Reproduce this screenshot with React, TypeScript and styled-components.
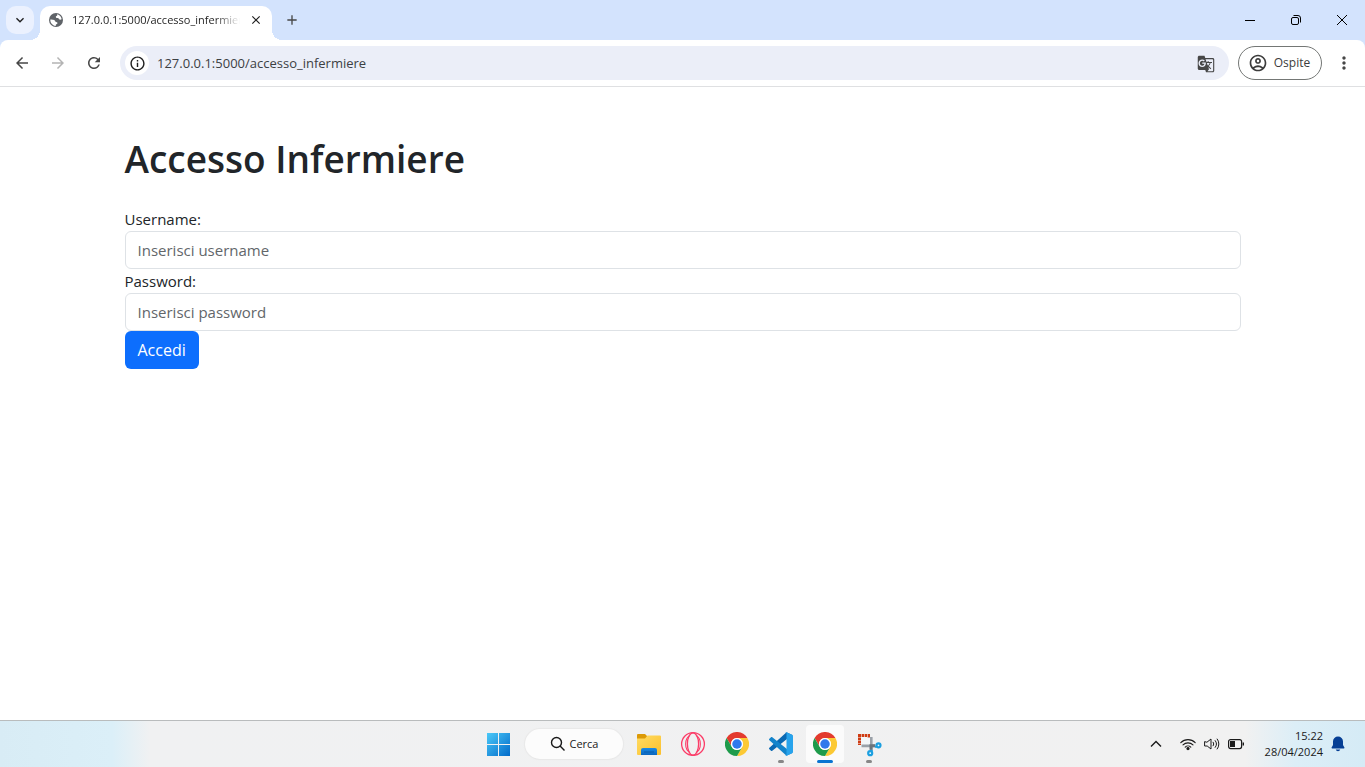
import React from "react";
import styled, { createGlobalStyle } from "styled-components";
import {
  MdAdd,
  MdArrowBack,
  MdArrowForward,
  MdClose,
  MdGTranslate,
  MdInfoOutline,
  MdKeyboardArrowDown,
  MdMoreVert,
  MdOutlineAccountCircle,
  MdRefresh,
} from "react-icons/md";

const GlobalStyle = createGlobalStyle`
  *, *::before, *::after { box-sizing: border-box; }
  body {
    margin: 0;
    background: #fff;
    color: #212529;
    font-family: "Open Sans", "Noto Sans", sans-serif;
    font-size: 15px;
    line-height: 24px;
  }
  button, input { font: inherit; color: inherit; margin: 0; }
  button { border: 0; padding: 0; background: none; cursor: pointer; }
  svg { display: block; flex: none; }
`;

const Screen = styled.div`
  display: flex;
  flex-direction: column;
  min-height: 100vh;
`;

/* Browser window */

const TabStrip = styled.header`
  display: flex;
  align-items: flex-start;
  height: 40px;
  padding-left: 6px;
  background: #d3e3fd;
`;

const TabSearch = styled.button`
  display: grid;
  place-items: center;
  width: 28px;
  height: 28px;
  margin: 6px 6px 0 0;
  border-radius: 10px;
  background: #ebf1fe;
  color: #1f1f1f;
`;

const Tab = styled.div`
  position: relative;
  display: flex;
  align-items: center;
  width: 232px;
  height: 34px;
  margin-top: 6px;
  padding: 0 8px 6px;
  border-radius: 10px 10px 0 0;
  background: #fff;
  color: #5f6368;

  &::before,
  &::after {
    content: "";
    position: absolute;
    bottom: 0;
    width: 10px;
    height: 10px;
  }
  &::before {
    left: -10px;
    background: radial-gradient(circle at 0 0, transparent 10px, #fff 10px);
  }
  &::after {
    right: -10px;
    background: radial-gradient(circle at 100% 0, transparent 10px, #fff 10px);
  }
`;

const TabTitle = styled.span`
  flex: 1;
  min-width: 0;
  margin: 0 8px;
  overflow: hidden;
  white-space: nowrap;
  color: #1f1f1f;
  font-size: 11px;
  line-height: 16px;
  mask-image: linear-gradient(to right, #000 85%, transparent);
`;

const SmallButton = styled.button`
  display: grid;
  place-items: center;
  width: 16px;
  height: 16px;
  color: #1f1f1f;
`;

const NewTab = styled.button`
  display: grid;
  place-items: center;
  width: 28px;
  height: 28px;
  margin: 6px 0 0 6px;
  color: #474747;
`;

const WindowControls = styled.div`
  display: flex;
  margin-left: auto;
`;

const WindowButton = styled.button`
  display: grid;
  place-items: center;
  width: 46px;
  height: 40px;
  color: #000;
`;

const ToolbarBack = styled.div`
  background: #d3e3fd;
`;

const Toolbar = styled.nav`
  display: flex;
  align-items: center;
  height: 47px;
  padding: 0 3px 0 4px;
  border-bottom: 1px solid #dfe0e2;
  border-radius: 8px 8px 0 0;
  background: #fff;
`;

const NavButton = styled.button<{ $muted?: boolean }>`
  display: grid;
  place-items: center;
  width: 36px;
  height: 36px;
  color: ${(p) => (p.$muted ? "#b4b4b4" : "#474747")};
`;

const AddressBar = styled.div`
  display: flex;
  flex: 1;
  align-items: center;
  height: 34px;
  margin: 0 9px 0 8px;
  padding: 0 16px 0 5px;
  border-radius: 17px;
  background: #ebeef8;
  color: #474747;
`;

const SiteInfo = styled.button`
  display: grid;
  place-items: center;
  width: 24px;
  height: 24px;
  border-radius: 50%;
  background: #fff;
  color: #1f1f1f;
`;

const AddressInput = styled.input`
  flex: 1;
  min-width: 0;
  height: 24px;
  padding: 0 8px;
  border: 0;
  outline: 0;
  background: none;
  color: #3c4043;
  font-size: 13px;
`;

const Profile = styled.button`
  display: flex;
  align-items: center;
  justify-content: center;
  gap: 6px;
  width: 84px;
  height: 34px;
  margin-right: 4px;
  padding-right: 2px;
  border: 1px solid #747775;
  border-radius: 17px;
  color: #3c3c3c;
  font-size: 12px;
`;

/* Login page */

const Container = styled.main`
  flex: 1;
  width: 100%;
  max-width: 1140px;
  margin: 0 auto;
  padding: 48px 12px;
`;

const Title = styled.h1`
  margin: 0 0 24px;
  font-size: 37px;
  font-weight: 600;
  line-height: 48px;
`;

const Form = styled.form`
  display: flex;
  flex-direction: column;
  align-items: flex-start;
`;

const Label = styled.label`
  color: #212529;
`;

const TextField = styled.input`
  width: 100%;
  height: 38px;
  padding: 6px 12px;
  border: 1px solid #dee2e6;
  border-radius: 6px;
  background: #fff;

  &::placeholder {
    color: #62666a;
    opacity: 1;
  }
`;

const Submit = styled.button`
  height: 38px;
  padding: 0 13px;
  border-radius: 6px;
  background: #0d6efd;
  color: #fff;
  font-size: 16px;
`;

/* Taskbar */

const Taskbar = styled.footer`
  display: grid;
  grid-template-columns: 1fr auto 1fr;
  align-items: center;
  height: 47px;
  border-top: 1px solid #b9bcbd;
  background: linear-gradient(
    to right,
    #d8ecf5 0,
    #dbeff8 112px,
    #f0f1f2 150px,
    #f1f1f1 calc(100% - 120px),
    #dceef7 calc(100% - 70px),
    #d5ebf6 100%
  );
`;

const Apps = styled.div`
  grid-column: 2;
  display: flex;
  align-items: center;
  gap: 4px;
  padding-left: 3px;
`;

const AppButton = styled.button<{ $state?: "open" | "active" }>`
  position: relative;
  display: grid;
  place-items: center;
  width: 40px;
  height: 40px;
  border: 1px solid transparent;
  background: ${(p) => (p.$state === "active" ? "#fbfbfb" : "none")};
  background-clip: padding-box;
  border-radius: 5px;

  &::after {
    content: "";
    display: ${(p) => (p.$state ? "block" : "none")};
    position: absolute;
    bottom: 0;
    left: 50%;
    width: ${(p) => (p.$state === "active" ? 16 : 6)}px;
    height: 3px;
    border-radius: 2px;
    background: ${(p) => (p.$state === "active" ? "#0a74d1" : "#878787")};
    transform: translateX(-50%);
  }
`;

const SearchButton = styled.button`
  display: flex;
  align-items: center;
  justify-content: center;
  gap: 4px;
  width: 98px;
  height: 30px;
  margin: 0 2px;
  border-radius: 15px;
  background: #fcfcfc;
  box-shadow: 0 0 1px 1px #e8e8e8;
  color: #1a1a1a;
  font-size: 11px;
`;

const Tray = styled.div`
  display: flex;
  align-items: center;
  justify-content: flex-end;
  padding-right: 19px;
  color: #1a1a1a;
`;

const TrayButton = styled.button<{ $gap?: number }>`
  display: grid;
  place-items: center;
  width: 16px;
  height: 24px;
  margin-right: ${(p) => p.$gap ?? 8}px;
`;

const Clock = styled.div`
  display: flex;
  flex-direction: column;
  margin: 0 7px 0 13px;
  text-align: right;
  font-size: 11px;
  line-height: 16px;
`;

const GlobeIcon = () => (
  <svg width="16" height="16" viewBox="0 0 16 16">
    <circle cx="8" cy="8" r="7" fill="#5f6368" />
    <path
      fill="#fff"
      d="M9.200 2.200c1 .2 2.600 1 3.400 2.200.7 1 1 2 1 2.800-.9.700-2.200.6-2.600-.2-.3-.7-1-.9-1.800-.9-1 0-1.600-.7-1.300-1.500.2-.6 1-.6 1.300-1.100.2-.5-.2-.9 0-1.300zM2.300 7.500c1.300-.2 3 0 4 .5.800.500.5 1.300 1.300 1.700.8.400 1.800.3 1.900 1.200.1 1-1.100 1-1.500 1.600-.3.500 0 1-.4 1.400C4.500 13.500 2.200 11 2.300 7.500z"
    />
  </svg>
);

const WindowsLogo = () => (
  <svg width="24" height="24" viewBox="0 0 24 24">
    <defs>
      <linearGradient id="win" gradientUnits="userSpaceOnUse" x1="0" y1="0" x2="24" y2="24">
        <stop offset="0" stopColor="#4ccbf9" />
        <stop offset="1" stopColor="#0068c8" />
      </linearGradient>
    </defs>
    <path fill="url(#win)" d="M0 1h11v11H0zM12 1h11v11H12zM0 13h11v11H0zM12 13h11v11H12z" />
  </svg>
);

const FolderLogo = () => (
  <svg width="26" height="24" viewBox="0 0 26 24">
    <defs>
      <linearGradient id="folder" x1="0" y1="0" x2="1" y2="1">
        <stop offset="0" stopColor="#ffdc63" />
        <stop offset="1" stopColor="#fbc02d" />
      </linearGradient>
      <linearGradient id="pocket" x1="0" y1="0" x2="0" y2="1">
        <stop offset="0" stopColor="#1a8be6" />
        <stop offset="1" stopColor="#0c66bd" />
      </linearGradient>
    </defs>
    <path fill="#dc9a07" d="M1 3a1 1 0 0 1 1-1h7l2 2h2v5H1z" />
    <path fill="url(#folder)" d="M1 6.500h8l2.500-3H24a1 1 0 0 1 1 1V22a1 1 0 0 1-1 1H2a1 1 0 0 1-1-1z" />
    <path fill="url(#pocket)" d="M5 23v-5a2 2 0 0 1 2-2h12a2 2 0 0 1 2 2v5z" />
    <path fill="#0a5dab" d="M8 19.500h10v1H8z" />
  </svg>
);

const OperaLogo = () => (
  <svg width="26" height="26" viewBox="0 0 26 26" fill="none" stroke="#fb3d68">
    <circle cx="13" cy="13" r="11.400" strokeWidth="1.300" />
    <ellipse cx="13" cy="13" rx="5.600" ry="11.200" strokeWidth="1.300" />
    <path strokeWidth="1.100" d="M10 4.500C4.200 7.500 4.200 18.500 10 21.500M16 4.500c5.800 3 5.800 14 0 17" />
  </svg>
);

const ChromeLogo = () => (
  <svg width="24" height="24" viewBox="0 0 48 48">
    <path fill="#e33b2e" d="M3.200 12A24 24 0 0 1 44.800 12H24a12 12 0 0 0-10.400 18z" />
    <path fill="#fcc934" d="M44.800 12A24 24 0 0 1 24 48l10.400-18A12 12 0 0 0 24 12z" />
    <path fill="#1e9b4b" d="M24 48A24 24 0 0 1 3.200 12l10.400 18a12 12 0 0 0 20.800 0z" />
    <circle cx="24" cy="24" r="12" fill="#fff" />
    <circle cx="24" cy="24" r="9.500" fill="#2f79ec" />
  </svg>
);

const CodeLogo = () => (
  <svg width="24" height="24" viewBox="0 0 24 24">
    <path fill="#0a69b3" d="M17.500.3 24 3.200 17.600 7.200 3.300 18.700c-.4.3-.9.300-1.300 0L.400 17.200c-.5-.4-.5-1.100 0-1.500z" />
    <path fill="#1384cb" d="M17.500 23.700 24 20.800 17.600 16.800 3.300 5.300c-.4-.3-.9-.3-1.300 0L.400 6.800c-.5.400-.5 1.100 0 1.500z" />
    <path fill="#27a3ec" d="M17.500 23.700c-.6.200-1.200.1-1.700-.4.600.6 1.700.2 1.700-.7V1.400c0-.9-1.100-1.300-1.700-.7.500-.5 1.100-.6 1.700-.4l5.500 2.500c.6.300 1 .9 1 1.500v15.400c0 .6-.4 1.200-1 1.500z" />
  </svg>
);

const SnipLogo = () => (
  <svg width="26" height="26" viewBox="0 0 26 26" fill="none">
    <path fill="#f3f6f8" d="M3 5h11v10H3z" />
    <path
      fill="#cf3b12"
      d="M2 3h3v3H2zM5.600 3h2.400v3H5.600zM8.600 3H11v3H8.600zM11.600 3H14v3.500h-2.400zM2 6.600h3V9H2zM2 9.600h3V12H2zM2 12.600h3V14H2z"
    />
    <path fill="#9aa1a8" d="M14 6h2.600v14H14zM5.500 13.600h14v2.600h-14z" />
    <path fill="#6c747b" d="M13.500 13.200h5.500v3h-2.500v2.500h-3z" />
    <circle cx="22.500" cy="14.300" r="2" fill="#e8f6fd" stroke="#1b9fe0" strokeWidth="2.200" />
    <circle cx="14.200" cy="22.200" r="2" fill="#e8f6fd" stroke="#1b9fe0" strokeWidth="2.200" />
    <path stroke="#1b9fe0" strokeWidth="2" d="M20.800 15.300l-1.800.8M15.200 20.500l.7-1.600" />
  </svg>
);

const SearchIcon = () => (
  <svg width="16" height="16" viewBox="0 0 16 16" fill="none" stroke="#1a1a1a" strokeWidth="1.400">
    <circle cx="6.500" cy="6.500" r="5" />
    <path d="M10.100 10.100 14.500 14.500" />
  </svg>
);

const WifiIcon = () => (
  <svg width="16" height="16" viewBox="0 0 16 16" fill="none" stroke="currentColor" strokeWidth="1.100" strokeLinecap="round">
    <path d="M.8 6.600a10.200 10.200 0 0 1 14.400 0M3 8.900a7.100 7.100 0 0 1 10 0M5.200 11.100a4 4 0 0 1 5.600 0" />
    <circle cx="8" cy="12.600" r="1.100" fill="currentColor" />
  </svg>
);

const SpeakerIcon = () => (
  <svg width="16" height="16" viewBox="0 0 16 16" fill="none" stroke="currentColor" strokeLinejoin="round" strokeLinecap="round">
    <path d="M.6 6v4h2.600L7 13V3L3.200 6z" />
    <path d="M9.200 6.200a3 3 0 0 1 0 3.600M11.200 4.600a5.400 5.400 0 0 1 0 6.800M13.200 3a8 8 0 0 1 0 10" />
  </svg>
);

const BatteryIcon = () => (
  <svg width="16" height="16" viewBox="0 0 16 16" fill="none" stroke="currentColor">
    <rect x=".6" y="3.600" width="13" height="9" rx="2" strokeWidth="1.200" />
    <rect x="2.500" y="5.500" width="4" height="5" fill="currentColor" />
    <path d="M15.300 6.500v3" strokeWidth="1.400" />
  </svg>
);

const BellIcon = () => (
  <svg width="16" height="16" viewBox="0 0 16 16" fill="#063f95">
    <path d="M8 .5a5 5 0 0 1 5 5V9l1.400 2.600c.2.500 0 .9-.6.900H2.200c-.6 0-.8-.4-.6-.9L3 9V5.500a5 5 0 0 1 5-5zM5.700 13.500h4.600a2.400 2.400 0 0 1-4.600 0z" />
  </svg>
);

export default function App() {
  return (
    <Screen>
      <GlobalStyle />
      <TabStrip>
        <TabSearch aria-label="Cerca schede">
          <MdKeyboardArrowDown size={16} />
        </TabSearch>
        <Tab>
          <GlobeIcon />
          <TabTitle>127.0.0.1:5000/accesso_infermiere</TabTitle>
          <SmallButton aria-label="Chiudi scheda">
            <MdClose size={14} />
          </SmallButton>
        </Tab>
        <NewTab aria-label="Nuova scheda">
          <MdAdd size={16} />
        </NewTab>
        <WindowControls>
          <WindowButton aria-label="Riduci a icona">
            <svg width="10" height="10" viewBox="0 0 10 10" stroke="currentColor">
              <path d="M0 5.500h10" />
            </svg>
          </WindowButton>
          <WindowButton aria-label="Ripristina">
            <svg width="10" height="10" viewBox="0 0 10 10" fill="none" stroke="currentColor">
              <rect x=".5" y="2.500" width="7" height="7" rx="1.500" />
              <path d="M2.500.5H7A2.500 2.500 0 0 1 9.500 3v4.500" />
            </svg>
          </WindowButton>
          <WindowButton aria-label="Chiudi">
            <svg width="10" height="10" viewBox="0 0 10 10" stroke="currentColor">
              <path d="M0 0l10 10M10 0L0 10" />
            </svg>
          </WindowButton>
        </WindowControls>
      </TabStrip>
      <ToolbarBack>
        <Toolbar>
          <NavButton aria-label="Indietro">
            <MdArrowBack size={18} />
          </NavButton>
          <NavButton aria-label="Avanti" $muted>
            <MdArrowForward size={18} />
          </NavButton>
          <NavButton aria-label="Ricarica">
            <MdRefresh size={18} />
          </NavButton>
          <AddressBar>
            <SiteInfo aria-label="Informazioni sul sito">
              <MdInfoOutline size={17} />
            </SiteInfo>
            <AddressInput aria-label="Indirizzo" defaultValue="127.0.0.1:5000/accesso_infermiere" />
            <SmallButton aria-label="Traduci">
              <MdGTranslate size={18} color="#474747" />
            </SmallButton>
          </AddressBar>
          <Profile>
            <MdOutlineAccountCircle size={20} />
            Ospite
          </Profile>
          <NavButton aria-label="Menu">
            <MdMoreVert size={20} />
          </NavButton>
        </Toolbar>
      </ToolbarBack>

      <Container>
        <Title>Accesso Infermiere</Title>
        <Form onSubmit={(e) => e.preventDefault()}>
          <Label htmlFor="username">Username:</Label>
          <TextField id="username" type="text" placeholder="Inserisci username" />
          <Label htmlFor="password">Password:</Label>
          <TextField id="password" type="password" placeholder="Inserisci password" />
          <Submit type="submit">Accedi</Submit>
        </Form>
      </Container>

      <Taskbar>
        <Apps>
          <AppButton aria-label="Start"><WindowsLogo /></AppButton>
          <SearchButton>
            <SearchIcon />
            Cerca
          </SearchButton>
          <AppButton aria-label="Esplora file"><FolderLogo /></AppButton>
          <AppButton aria-label="Opera"><OperaLogo /></AppButton>
          <AppButton aria-label="Chrome"><ChromeLogo /></AppButton>
          <AppButton aria-label="Visual Studio Code" $state="open"><CodeLogo /></AppButton>
          <AppButton aria-label="Chrome, finestra attiva" $state="active"><ChromeLogo /></AppButton>
          <AppButton aria-label="Strumento di cattura" $state="open"><SnipLogo /></AppButton>
        </Apps>
        <Tray>
          <TrayButton aria-label="Icone nascoste" $gap={16}>
            <svg width="12" height="12" viewBox="0 0 12 12" fill="none" stroke="currentColor" strokeWidth="1.400">
              <path d="M1 8.500l5-5 5 5" />
            </svg>
          </TrayButton>
          <TrayButton aria-label="Rete"><WifiIcon /></TrayButton>
          <TrayButton aria-label="Volume"><SpeakerIcon /></TrayButton>
          <TrayButton aria-label="Batteria"><BatteryIcon /></TrayButton>
          <Clock>
            <span>15:22</span>
            <span>28/04/2024</span>
          </Clock>
          <TrayButton aria-label="Notifiche" $gap={0}><BellIcon /></TrayButton>
        </Tray>
      </Taskbar>
    </Screen>
  );
}
